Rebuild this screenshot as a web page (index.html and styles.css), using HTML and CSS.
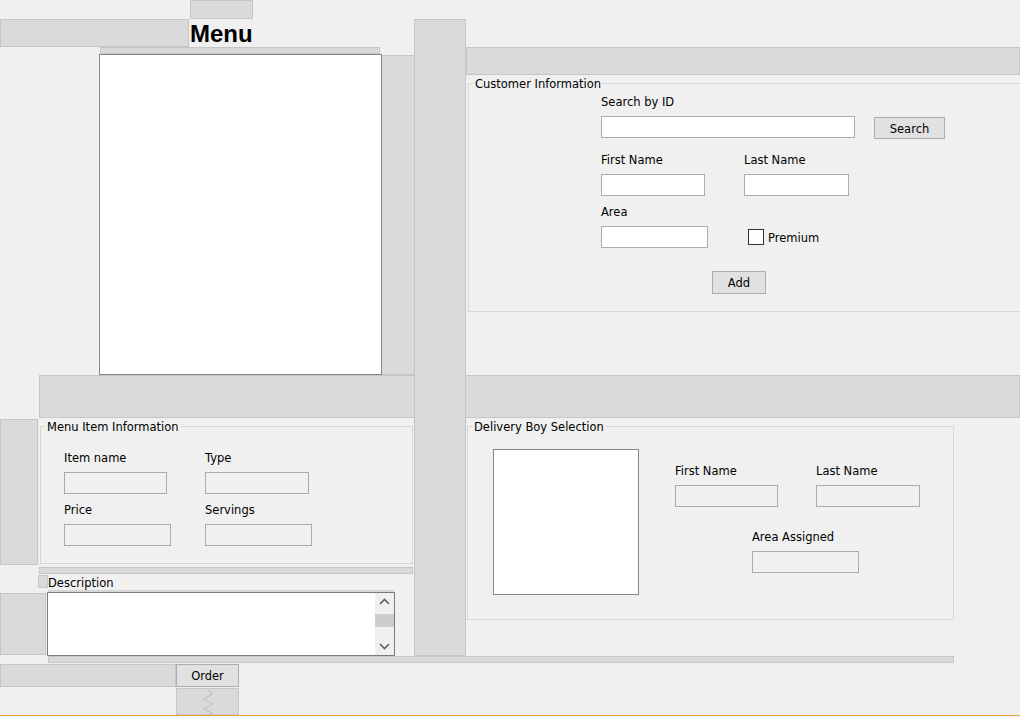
FILE: index.html
```html
<!DOCTYPE html>
<html lang="en">
<head>
<meta charset="utf-8">
<title>Menu</title>
<link rel="stylesheet" href="styles.css">
</head>
<body>
<div class="frame">
  <div class="filler f-top"></div>
  <div class="filler f-lefttop"></div>
  <h1 class="menu-title">Menu</h1>
  <div class="filler bar-list"></div>
  <div class="listbox menu-list"></div>
  <div class="filler f-listside"></div>
  <div class="filler f-tall"></div>

  <div class="right-col">
    <div class="filler bar-right"></div>
    <fieldset class="group cust-group">
      <legend>Customer Information</legend>
      <div class="cust-body">
        <div class="lbl">Search by ID</div>
        <div class="row r-search">
          <div class="field w-search"></div>
          <button class="btn search-btn">Search</button>
        </div>
        <div class="row r-labels">
          <div class="lbl col-a">First Name</div>
          <div class="lbl">Last Name</div>
        </div>
        <div class="row r-fields">
          <div class="field w-fn"></div>
          <div class="field w-ln"></div>
        </div>
        <div class="row r-labels2">
          <div class="lbl">Area</div>
        </div>
        <div class="row r-area">
          <div class="field w-area"></div>
          <span class="checkbox"></span>
          <span class="lbl chk-lbl">Premium</span>
        </div>
        <div class="row r-add">
          <button class="btn add-btn">Add</button>
        </div>
      </div>
    </fieldset>
  </div>

  <div class="filler f-mid"></div>
  <div class="filler f-left-mid"></div>

  <fieldset class="group item-group">
    <legend>Menu Item Information</legend>
    <div class="item-body">
      <div class="row">
        <div class="lbl item-col">Item name</div>
        <div class="lbl">Type</div>
      </div>
      <div class="row gap7">
        <div class="field off w-iname"></div>
        <div class="field off w-type"></div>
      </div>
      <div class="row gap8">
        <div class="lbl item-col">Price</div>
        <div class="lbl">Servings</div>
      </div>
      <div class="row gap7">
        <div class="field off w-price"></div>
        <div class="field off w-serv"></div>
      </div>
    </div>
  </fieldset>

  <div class="filler bar-item"></div>
  <div class="desc-row">
    <span class="filler desc-sq"></span>
    <span class="lbl">Description</span>
  </div>
  <div class="filler f-left-desc"></div>
  <div class="scrollpane">
    <div class="sp-strip"></div>
    <div class="sp-box">
      <div class="sp-text"></div>
      <div class="sp-bar">
        <svg class="arrow" width="11" height="7" viewBox="0 0 11 7"><polyline points="1,6 5.5,1.5 10,6" fill="none" stroke="#606060" stroke-width="1.6"/></svg>
        <div class="thumb"></div>
        <div class="sp-spacer"></div>
        <svg class="arrow" width="11" height="7" viewBox="0 0 11 7"><polyline points="1,1 5.5,5.5 10,1" fill="none" stroke="#606060" stroke-width="1.6"/></svg>
      </div>
    </div>
  </div>

  <fieldset class="group del-group">
    <legend>Delivery Boy Selection</legend>
    <div class="del-body">
      <div class="listbox del-list"></div>
      <div class="del-fields">
        <div class="row">
          <div class="lbl del-col">First Name</div>
          <div class="lbl">Last Name</div>
        </div>
        <div class="row gap7">
          <div class="field off w-dfn"></div>
          <div class="field off w-dln"></div>
        </div>
        <div class="row gap22 area-assigned">
          <div class="lbl">Area Assigned</div>
        </div>
        <div class="row gap7 area-assigned">
          <div class="field off w-darea"></div>
        </div>
      </div>
    </div>
  </fieldset>

  <div class="filler bar-bottom"></div>
  <div class="filler f-bottom-left"></div>
  <button class="btn order-btn">Order</button>
  <div class="filler spring">
    <svg width="62" height="27" viewBox="0 0 62 27"><polyline points="31,1 36,5 27,10 36,15 27,20 36,24 31,26" fill="none" stroke="#bdbdbd" stroke-width="1"/></svg>
  </div>
  <div class="status-line"></div>
</div>
</body>
</html>
```

FILE: styles.css
```css
html, body {
  margin: 0;
  padding: 0;
}
body {
  background: #f0f0f0;
  font-family: "DejaVu Sans", "Liberation Sans", sans-serif;
  font-size: 11.5px;
  color: #000;
  overflow: hidden;
}
.frame {
  display: grid;
  width: 1020px;
  height: 717px;
  grid-template-columns: 39px 8px 52px 77px 14px 49px 14px 128px 33px 52px 488px 66px;
  grid-template-rows: 19px 28px 7px 321px 43px 148px 9px 15px 66px 8px 23px 28px 2px;
}
.filler {
  background: #dadada;
  border: 1px solid #c6c6c6;
  box-sizing: border-box;
}
.lbl {
  line-height: 13px;
  padding-top: 2px;
  white-space: nowrap;
}
.row {
  display: flex;
  align-items: center;
}
.field {
  height: 22px;
  box-sizing: border-box;
  background: #fff;
  border: 1px solid #abadb3;
}
.field.off {
  background: #f0f0f0;
  border-color: #a9a9b1;
}
.btn {
  font-family: "DejaVu Sans", "Liberation Sans", sans-serif;
  font-size: 11.5px;
  color: #000;
  background: #e1e1e1;
  border: 1px solid #adadad;
  box-sizing: border-box;
  padding: 1px 0 0;
  height: 23px;
  margin: 0;
}
.listbox {
  background: #fff;
  border: 1px solid #828790;
  box-sizing: border-box;
}

/* top area */
.f-top { grid-column: 6 / 8; grid-row: 1 / 2; }
.f-lefttop { grid-column: 1 / 6; grid-row: 2 / 3; margin-right: 1px; }
.menu-title {
  grid-column: 6 / 9;
  grid-row: 2 / 3;
  margin: 0;
  padding-top: 2px;
  font-family: "Liberation Sans", Arial, sans-serif;
  font-weight: bold;
  font-size: 24px;
  line-height: 26px;
}
.bar-list { grid-column: 4 / 9; grid-row: 3 / 4; margin: 0 1px; }
.menu-list { grid-column: 4 / 9; grid-row: 4 / 5; margin-right: -1px; position: relative; z-index: 1; }
.f-listside { grid-column: 9 / 10; grid-row: 4 / 5; margin-top: 1px; margin-right: -1px; }
.f-tall { grid-column: 10 / 11; grid-row: 2 / 10; position: relative; z-index: 2; }

/* right column: customer */
.right-col {
  grid-column: 11 / 13;
  grid-row: 3 / 5;
  display: flex;
  flex-direction: column;
  min-width: 0;
}
.bar-right { height: 28px; flex: none; }
.group {
  margin: 0;
  padding: 0;
  min-width: 0;
  border: 1px solid #d7d7d7;
  box-sizing: border-box;
}
.group legend {
  padding: 2px 2px 0;
  margin-left: 4px;
  line-height: 13px;
  font-size: 11.5px;
}
.cust-group {
  margin: 1px -3px 0 2px;
}
.cust-body {
  padding: 3px 0 17px 132px;
}
.r-search { margin-top: 7px; height: 22px; align-items: flex-start; }
.w-search { width: 254px; }
.search-btn { width: 71px; height: 22px; margin-left: 19px; margin-top: 1px; }
.r-labels { margin-top: 14px; }
.col-a { width: 143px; }
.r-fields { margin-top: 7px; }
.w-fn { width: 104px; }
.w-ln { width: 105px; margin-left: 39px; }
.r-labels2 { margin-top: 8px; }
.r-area { margin-top: 7px; height: 22px; }
.w-area { width: 107px; }
.checkbox {
  width: 16px;
  height: 16px;
  box-sizing: border-box;
  border: 1px solid #333;
  background: #fff;
  margin-left: 40px;
}
.chk-lbl { margin-left: 4px; }
.r-add { margin-top: 23px; }
.add-btn { width: 54px; margin-left: 111px; }

/* middle */
.f-mid { grid-column: 2 / 13; grid-row: 5 / 6; }
.f-left-mid { grid-column: 1 / 2; grid-row: 6 / 7; margin: 1px 1px 1px 0; }

.item-group {
  grid-column: 2 / 10;
  grid-row: 6 / 7;
  align-self: start;
  margin: 1px 1px 0 1px;
}
.item-body { padding: 16px 0 17px 23px; }
.item-col { width: 141px; }
.gap7 { margin-top: 7px; }
.gap8 { margin-top: 8px; }
.gap22 { margin-top: 22px; }
.w-iname { width: 103px; }
.w-type { width: 104px; margin-left: 38px; }
.w-price { width: 107px; }
.w-serv { width: 107px; margin-left: 34px; }

.bar-item { grid-column: 2 / 10; grid-row: 7 / 8; margin: 1px 1px 1px 0; }
.desc-row {
  grid-column: 2 / 9;
  grid-row: 8 / 9;
  display: flex;
  align-items: flex-start;
}
.desc-sq { width: 10px; height: 13px; margin-left: -1px; }
.f-left-desc { grid-column: 1 / 3; grid-row: 9 / 10; margin: 3px 1px 1px 0; }

.scrollpane {
  grid-column: 3 / 9;
  grid-row: 9 / 10;
  width: 348px;
  display: flex;
  flex-direction: column;
}
.sp-strip { height: 2px; background: #d6d6d6; margin: 0 1px; }
.sp-box {
  flex: 1;
  display: flex;
  border: 1px solid #7a7a88;
  background: #fff;
}
.sp-text { flex: 1; }
.sp-bar {
  width: 19px;
  background: #f0f0f0;
  display: flex;
  flex-direction: column;
  align-items: center;
}
.arrow { margin-top: 5px; flex: none; }
.sp-bar .arrow:last-child { margin-top: 0; margin-bottom: 5px; }
.thumb { width: 19px; height: 13px; background: #cdcdcd; margin-top: 9px; flex: none; }
.sp-spacer { flex: 1; }

/* delivery */
.del-group {
  grid-column: 11 / 12;
  grid-row: 6 / 10;
  align-self: start;
  width: 487px;
  margin: 1px 0 0 1px;
}
.del-body {
  display: flex;
  align-items: flex-start;
  padding: 15px 0 24px 25px;
}
.del-list { width: 146px; height: 146px; flex: none; }
.del-fields { margin-left: 36px; margin-top: 14px; }
.del-col { width: 141px; }
.w-dfn { width: 103px; }
.w-dln { width: 104px; margin-left: 38px; }
.area-assigned { padding-left: 77px; }
.w-darea { width: 107px; }

/* bottom */
.bar-bottom { grid-column: 3 / 12; grid-row: 10 / 11; margin: 0 0 1px 1px; }
.f-bottom-left { grid-column: 1 / 5; grid-row: 11 / 12; }
.order-btn { grid-column: 5 / 7; grid-row: 11 / 12; width: 63px; }
.spring { grid-column: 5 / 7; grid-row: 12 / 13; margin-top: 1px; display: flex; }
.spring svg { display: block; }
.status-line { grid-column: 1 / 13; grid-row: 13 / 14; border-top: 1px solid #eaa23a; }
```
